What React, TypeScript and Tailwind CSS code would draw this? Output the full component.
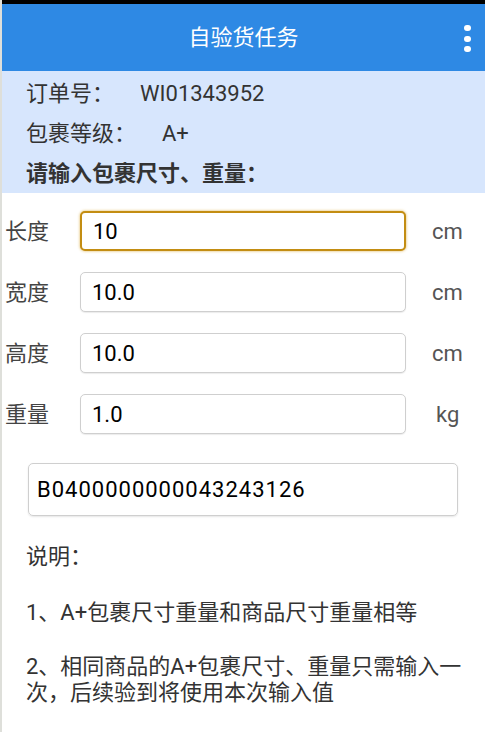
import React from "react";

const FONT = { fontFamily: 'Roboto, "Noto Sans CJK SC", sans-serif' };

const FIELDS = [
  { label: "长度", value: "10", unit: "cm", focused: true },
  { label: "宽度", value: "10.0", unit: "cm" },
  { label: "高度", value: "10.0", unit: "cm" },
  { label: "重量", value: "1.0", unit: "kg" },
];

export default function App() {
  return (
    <div className="w-[485px] h-[732px] bg-white border-l-2 border-[#dedfda] overflow-hidden flex flex-col" style={FONT}>
      {/* status bar strip */}
      <div className="h-[4px] bg-black shrink-0" />

      {/* Header */}
      <div className="relative h-[67px] bg-[#2e89e4] flex items-center justify-center shrink-0">
        <span className="text-white text-[22px] leading-none">自验货任务</span>
        <div className="absolute right-[14px] top-[21px] flex flex-col gap-[4.5px]">
          <span className="w-[7px] h-[6px] rounded-full bg-white" />
          <span className="w-[7px] h-[6px] rounded-full bg-white" />
          <span className="w-[7px] h-[6px] rounded-full bg-white" />
        </div>
      </div>

      {/* Order info */}
      <div className="bg-[#d7e6fd] pl-[24px] pt-[2px] h-[122px] text-[22px] text-[#333] shrink-0">
        <div className="h-[40px] flex items-center">
          <span>订单号：</span>
          <span className="ml-[26px]">WI01343952</span>
        </div>
        <div className="h-[40px] flex items-center">
          <span>包裹等级：</span>
          <span className="ml-[26px]">A+</span>
        </div>
        <div className="h-[40px] flex items-center font-bold">请输入包裹尺寸、重量：</div>
      </div>

      {/* Dimension fields */}
      <div className="flex flex-col gap-[21px] mt-[18px]">
        {FIELDS.map((f) => (
          <div key={f.label} className="flex items-center h-[40px]">
            <span className="w-[78px] pl-[3px] text-[22px] text-[#444]">{f.label}</span>
            <div
              className={`w-[326px] h-[40px] rounded-[5px] flex items-center pl-[11px] bg-white text-[22px] text-black ${
                f.focused
                  ? "border-2 border-[#c38d12] shadow-[0_0_3px_rgba(214,160,40,0.8)]"
                  : "border border-[#cfcfcf] shadow-[0_1px_1px_rgba(0,0,0,0.08)]"
              }`}
            >
              {f.value}
            </div>
            <span className={`text-[22px] text-[#555] ${f.unit === "kg" ? "ml-[30px]" : "ml-[26px]"}`}>{f.unit}</span>
          </div>
        ))}
      </div>

      {/* Barcode */}
      <div className="ml-[26px] mt-[29px] w-[430px] h-[53px] rounded-[5px] border border-[#cfcfcf] shadow-[0_1px_2px_rgba(0,0,0,0.1)] flex items-center pl-[8px] text-[22px] tracking-[1px] text-black">
        B0400000000043243126
      </div>

      {/* Notes */}
      <div className="pl-[24px] pr-[6px] mt-[28px] text-[22px] text-[#333] leading-[26px]">
        <p>说明：</p>
        <p className="mt-[30px]">1、A+包裹尺寸重量和商品尺寸重量相等</p>
        <p className="mt-[28px]">2、相同商品的A+包裹尺寸、重量只需输入一次，后续验到将使用本次输入值</p>
      </div>
    </div>
  );
}
